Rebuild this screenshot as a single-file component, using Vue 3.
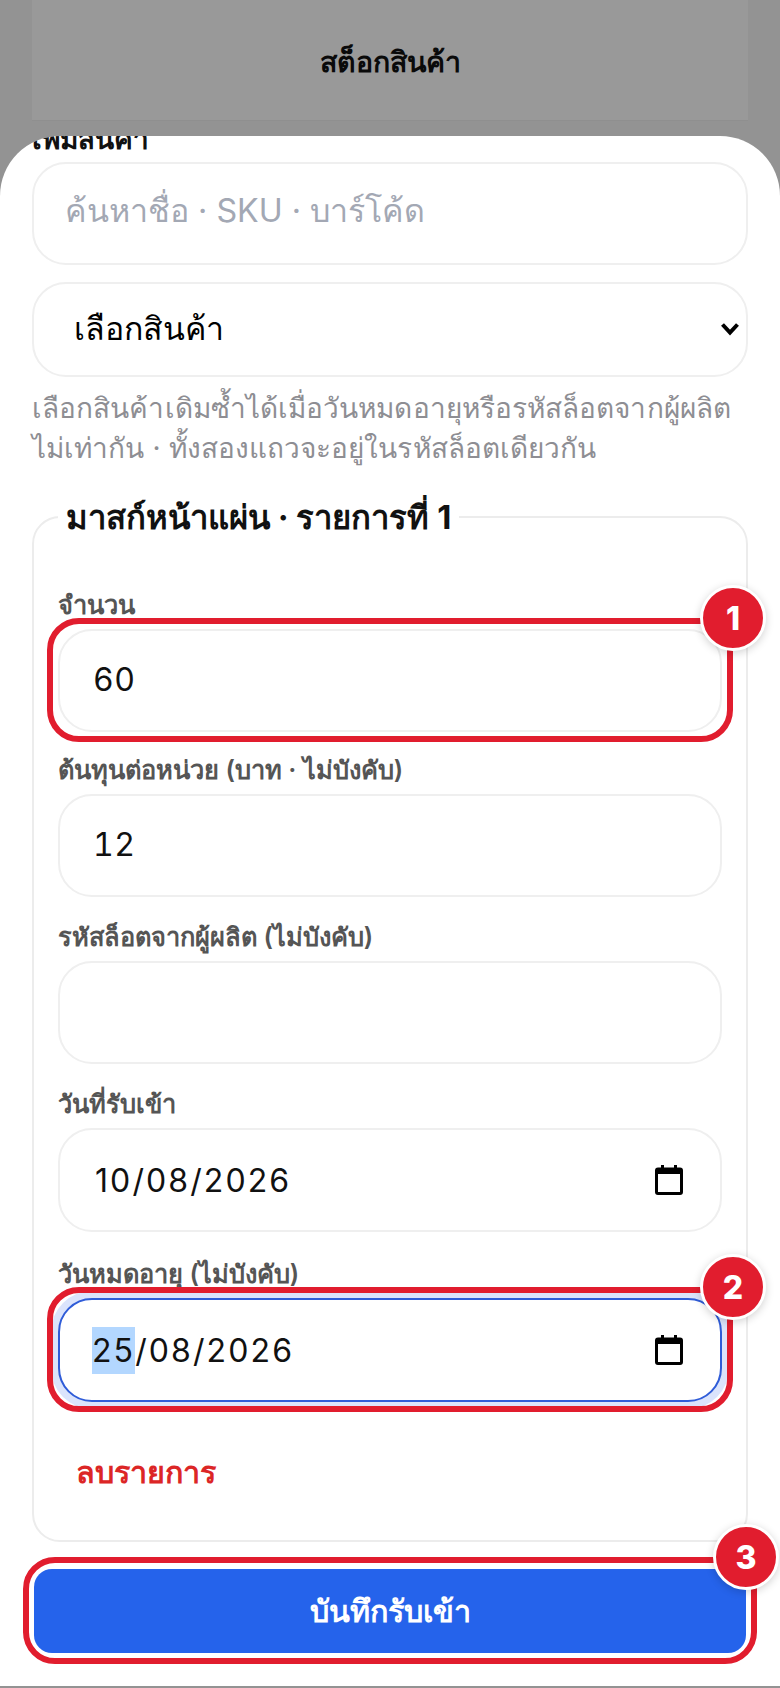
<script setup>
const fields = [
  { label: 'ต้นทุนต่อหน่วย (บาท · ไม่บังคับ)', value: '12', spacing: 'gap-b' },
  { label: 'รหัสล็อตจากผู้ผลิต (ไม่บังคับ)', value: '', spacing: 'gap-c' },
]
</script>

<template>
  <div class="page">
    <header class="topbar"><h1>สต็อกสินค้า</h1></header>

    <section class="sheet">
      <div class="clipped-label">เพิ่มสินค้า</div>
      <input class="control search" type="text" placeholder="ค้นหาชื่อ · SKU · บาร์โค้ด" />

      <div class="select-wrap">
        <select class="control select">
          <option>เลือกสินค้า</option>
        </select>
        <svg class="chevron" viewBox="0 0 20 14" aria-hidden="true">
          <path d="M2.500 2.500 10 10.500l7.500-8" fill="none" stroke="#000" stroke-width="4" />
        </svg>
      </div>

      <p class="help">เลือกสินค้าเดิมซ้ำได้เมื่อวันหมดอายุหรือรหัสล็อตจากผู้ผลิต<br />ไม่เท่ากัน · ทั้งสองแถวจะอยู่ในรหัสล็อตเดียวกัน</p>

      <fieldset class="batch">
        <legend>มาสก์หน้าแผ่น · รายการที่ 1</legend>

        <div class="field">
          <label>จำนวน</label>
          <div class="marked">
            <input class="control num" type="text" value="60" />
            <span class="ring"></span>
            <span class="badge">1</span>
          </div>
        </div>

        <div v-for="f in fields" :key="f.label" class="field" :class="f.spacing">
          <label>{{ f.label }}</label>
          <input class="control num" type="text" :value="f.value" />
        </div>

        <div class="field gap-d">
          <label>วันที่รับเข้า</label>
          <div class="control date">
            <span>10/08/2026</span>
            <svg class="cal" viewBox="0 0 28 30" aria-hidden="true">
              <path d="M6 0h3v4H6zM19 0h3v4h-3z" fill="#000" />
              <path d="M3 2.500h22A3 3 0 0 1 28 5.500v21.500a3 3 0 0 1-3 3H3a3 3 0 0 1-3-3V5.500a3 3 0 0 1 3-3zM3 9v18h22V9z" fill="#000" fill-rule="evenodd" />
            </svg>
          </div>
        </div>

        <div class="field gap-e">
          <label>วันหมดอายุ (ไม่บังคับ)</label>
          <div class="marked">
            <div class="control date focused">
              <span><span class="picked">25</span>/08/2026</span>
              <svg class="cal" viewBox="0 0 28 30" aria-hidden="true">
                <path d="M6 0h3v4H6zM19 0h3v4h-3z" fill="#000" />
                <path d="M3 2.500h22A3 3 0 0 1 28 5.500v21.500a3 3 0 0 1-3 3H3a3 3 0 0 1-3-3V5.500a3 3 0 0 1 3-3zM3 9v18h22V9z" fill="#000" fill-rule="evenodd" />
              </svg>
            </div>
            <span class="ring"></span>
            <span class="badge">2</span>
          </div>
        </div>

        <button class="remove" type="button">ลบรายการ</button>
      </fieldset>

      <div class="marked submit-wrap">
        <button class="submit" type="button">บันทึกรับเข้า</button>
        <span class="ring ring-submit"></span>
        <span class="badge badge-submit">3</span>
      </div>
    </section>
  </div>
</template>

<style>
html, body { margin: 0; padding: 0; }
</style>

<style scoped>
.page {
  width: 780px;
  height: 1688px;
  box-sizing: border-box;
  padding-bottom: 2px;
  display: flex;
  flex-direction: column;
  background: #939393;
  overflow: hidden;
  font-family: Inter, "Noto Sans", "Liberation Sans", sans-serif;
  color: #111;
}
.topbar {
  flex: none;
  height: 120px;
  margin: 0 32px 16px;
  box-sizing: border-box;
  display: flex;
  align-items: center;
  justify-content: center;
  background: #999;
  box-shadow: 0 1px 0 #8f8f8f;
}
.topbar h1 {
  margin: 4px 0 0;
  font-size: 28.500px;
  font-weight: 700;
  color: #0a0a0a;
}
.sheet {
  flex: 1;
  min-height: 0;
  padding: 0 32px;
  background: #fff;
  border-radius: 60px 60px 0 0;
  overflow: hidden;
}
.clipped-label {
  height: 36px;
  margin: -15px 0 5px;
  font-size: 28px;
  line-height: 36px;
  font-weight: 700;
  color: #111;
}
.control {
  display: block;
  width: 100%;
  height: 103px;
  box-sizing: border-box;
  padding: 0 33px 3px;
  border: 2px solid #efefef;
  border-radius: 34px;
  background: #fff;
  font: inherit;
  font-size: 32px;
  letter-spacing: 0.500px;
  color: #111;
  outline: none;
}
.num { font-variant-numeric: tabular-nums; }
.search {
  padding: 0 31px 6px;
  font-size: 32.200px;
  letter-spacing: 0;
}
.search::placeholder { color: #a3a8b4; opacity: 1; }
.select-wrap { position: relative; margin-top: 17px; }
.select {
  height: 95px;
  appearance: none;
  -webkit-appearance: none;
  padding: 0 40px 2px;
  letter-spacing: 0;
  color: #000;
}
.chevron {
  position: absolute;
  right: 8px;
  top: 40px;
  width: 20px;
  height: 14px;
  pointer-events: none;
}
.help {
  margin: 11px 0 27px;
  font-size: 28px;
  letter-spacing: 0.070px;
  line-height: 40px;
  color: #8e8e93;
  white-space: nowrap;
}
.batch {
  margin: 0;
  padding: 48px 24px 34px;
  min-width: 0;
  border: 2px solid #ececec;
  border-radius: 28px;
}
.batch legend {
  padding: 0 8px;
  font-size: 32.800px;
  line-height: 44px;
  font-weight: 700;
  color: #111;
}
.field label {
  display: block;
  height: 36px;
  margin-bottom: 6px;
  font-size: 25.400px;
  line-height: 36px;
  font-weight: 600;
  color: #555;
}
.gap-b { margin-top: 20px; }
.gap-c { margin-top: 22px; }
.gap-d { margin-top: 22px; }
.gap-e { margin-top: 24px; }
.marked { position: relative; }
.ring {
  position: absolute;
  inset: -11px -11px -10px;
  border: 6px solid #e11d2e;
  border-radius: 32px;
  pointer-events: none;
}
.badge {
  position: absolute;
  top: -44px;
  right: -44px;
  width: 60px;
  height: 60px;
  border: 3px solid #fff;
  border-radius: 50%;
  display: flex;
  align-items: center;
  justify-content: center;
  background: #e11d2e;
  box-shadow: 0 2px 8px rgba(0, 0, 0, 0.18);
  color: #fff;
  font-size: 32px;
  font-weight: 800;
  letter-spacing: 0;
}
.date {
  height: 104px;
  display: flex;
  align-items: center;
  justify-content: space-between;
  padding: 0 37px 0 35px;
  letter-spacing: 2.100px;
}
.focused {
  border: 2.500px solid #2f5cd8;
  box-shadow: 0 0 0 7px #dbe4fc;
  padding-left: 32px;
}
.picked {
  background: #b3d7ff;
  padding: 4px 0;
}
.cal { flex: none; width: 28px; height: 30px; }
.remove {
  display: block;
  margin: 36px 0 0;
  padding: 12px 18px;
  border: 0;
  background: none;
  font: inherit;
  font-size: 30.500px;
  line-height: 44px;
  font-weight: 700;
  color: #dc2626;
}
.submit-wrap { margin: 27px 2px 0; }
.submit {
  display: block;
  width: 100%;
  height: 84px;
  border: 0;
  border-radius: 18px;
  background: #2563eb;
  font: inherit;
  font-size: 30.500px;
  font-weight: 600;
  color: #fff;
}
.ring-submit { inset: -12px -11px -11px; }
.badge-submit { top: -45px; right: -33px; }
</style>
